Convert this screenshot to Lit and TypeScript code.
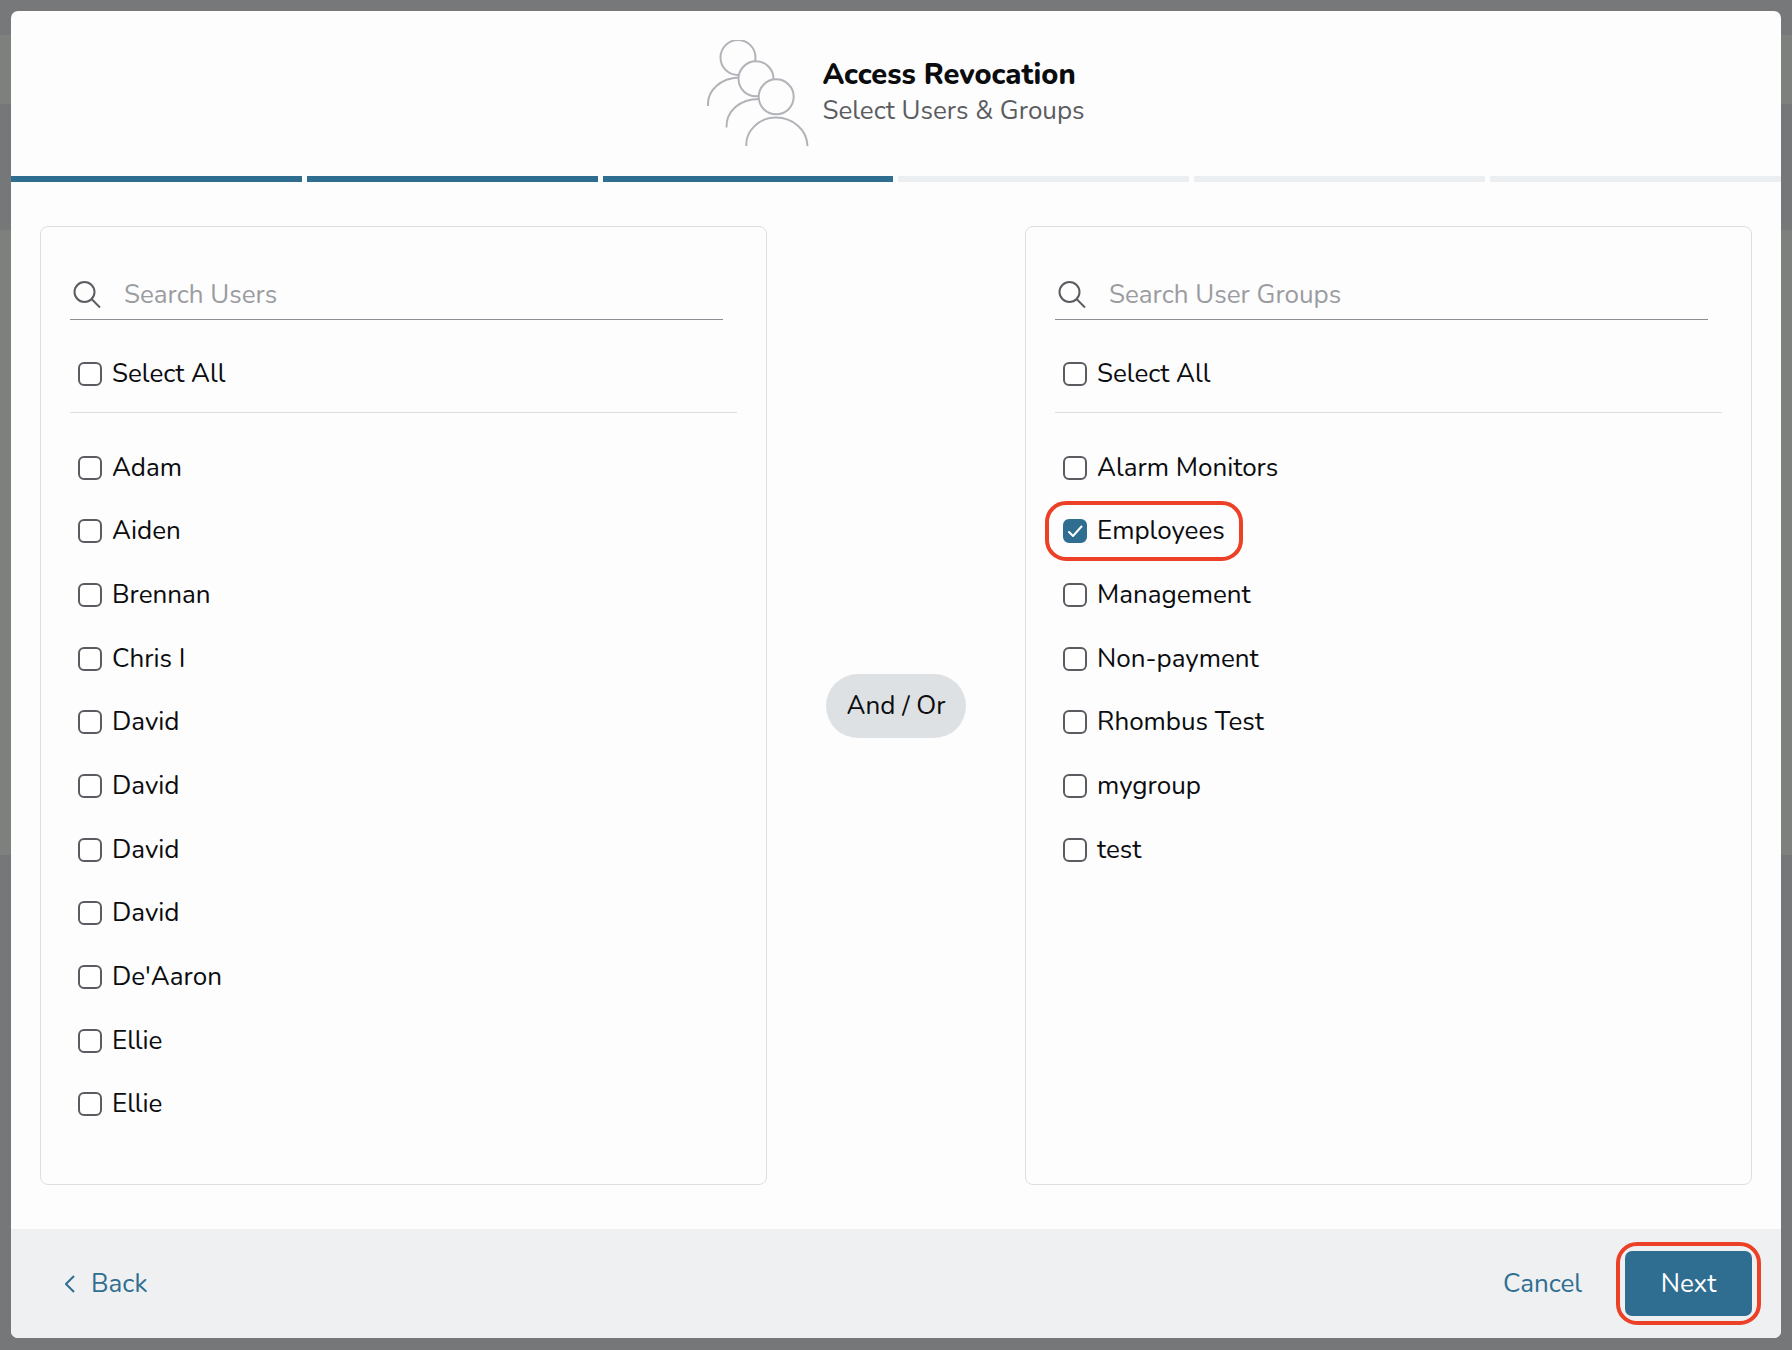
// ─────────────────────────────────────────────────────────────────────────────
// Access revocation wizard: "Select Users & Groups" step
//
//   <app-root>        dialog frame: header, step bar, body, footer
//   <step-bar>        segmented progress bar
//   <pick-list>       search field + "Select All" + list of checkboxes
//   <check-option>    one labelled checkbox
// ─────────────────────────────────────────────────────────────────────────────

import { LitElement, html, css, svg } from "lit";
import { customElement, property, state } from "lit/decorators.js";
import { classMap } from "lit/directives/class-map.js";

interface Option {
  name: string;
  checked?: boolean;
  marked?: boolean; // drawn with the red callout ring
}

const USERS: Option[] = [
  { name: "Adam" },
  { name: "Aiden" },
  { name: "Brennan" },
  { name: "Chris I" },
  { name: "David" },
  { name: "David" },
  { name: "David" },
  { name: "David" },
  { name: "De'Aaron" },
  { name: "Ellie" },
  { name: "Ellie" },
];

const GROUPS: Option[] = [
  { name: "Alarm Monitors" },
  { name: "Employees", checked: true, marked: true },
  { name: "Management" },
  { name: "Non-payment" },
  { name: "Rhombus Test" },
  { name: "mygroup" },
  { name: "test" },
];

// ─── step-bar ────────────────────────────────────────────────────────────────
@customElement("step-bar")
class StepBar extends LitElement {
  @property({ type: Number }) total = 6;
  @property({ type: Number }) current = 1;

  static styles = css`
    :host {
      display: flex;
      gap: 5px;
      height: 6px;
    }

    .step {
      flex: 1;
      background: #eceff2;
    }

    .step.done {
      background: #2f6e91;
    }
  `;

  render() {
    return Array.from(
      { length: this.total },
      (_, i) => html`<div class=${classMap({ step: true, done: i < this.current })}></div>`
    );
  }
}

// ─── check-option ────────────────────────────────────────────────────────────
@customElement("check-option")
class CheckOption extends LitElement {
  @property() label = "";
  @property({ type: Boolean }) checked = false;
  @property({ type: Boolean }) marked = false;

  static styles = css`
    :host {
      display: block;
      padding-left: 8px;
    }

    .option {
      position: relative;
      display: flex;
      align-items: center;
      gap: 10px;
      width: fit-content;
      line-height: 36px;
      cursor: pointer;
    }

    /* input and tick share one grid cell */
    .box {
      display: grid;
      width: 24px;
      height: 24px;
    }

    .box > * {
      grid-area: 1 / 1;
    }

    input {
      appearance: none;
      box-sizing: border-box;
      width: 24px;
      height: 24px;
      margin: 0;
      border: 2px solid #5b5c62;
      border-radius: 6px;
      background: #fff;
      cursor: pointer;
    }

    input:checked {
      border-color: #2f6e91;
      background: #2f6e91;
    }

    .tick {
      display: none;
      pointer-events: none;
      fill: none;
      stroke: #fff;
      stroke-width: 2;
      stroke-linecap: round;
      stroke-linejoin: round;
    }

    input:checked + .tick {
      display: block;
    }

    .marked::after {
      content: "";
      position: absolute;
      inset: -12px -18px;
      border: 4px solid #ec4126;
      border-radius: 21px;
      pointer-events: none;
    }
  `;

  private _onChange(e: Event) {
    this.checked = (e.target as HTMLInputElement).checked;
    this.dispatchEvent(new CustomEvent("toggle", { detail: this.checked }));
  }

  render() {
    return html`
      <label class=${classMap({ option: true, marked: this.marked })}>
        <span class="box">
          <input type="checkbox" .checked=${this.checked} @change=${this._onChange} />
          <svg class="tick" viewBox="0 0 24 24" width="24" height="24">
            <path d="M6 13 L10 17 L18.5 7.5" />
          </svg>
        </span>
        <span>${this.label}</span>
      </label>
    `;
  }
}

// ─── pick-list ───────────────────────────────────────────────────────────────
@customElement("pick-list")
class PickList extends LitElement {
  @property() placeholder = "";
  @property({ attribute: false }) options: Option[] = [];
  @state() private _query = "";

  static styles = css`
    :host {
      box-sizing: border-box;
      display: flex;
      flex-direction: column;
      padding: 43px 29px 48px;
      border: 1px solid #dcdee2;
      border-radius: 8px;
    }

    .search {
      display: flex;
      align-items: center;
      gap: 23px;
      height: 49px;
      margin-right: 14px;
      padding-left: 3px;
      border-bottom: 1px solid #8d8e93;
    }

    .search svg {
      flex: none;
      fill: none;
      stroke: #5b5c62;
      stroke-width: 2;
    }

    .search input {
      flex: 1;
      min-width: 0;
      padding: 0;
      border: 0;
      outline: 0;
      background: none;
      color: #0b0c0e;
      font: inherit;
      line-height: 36px;
    }

    .search input::placeholder {
      color: #9b9ca0;
      opacity: 1;
    }

    .all {
      padding: 36px 0 20px;
      border-bottom: 1px solid #dcdee2;
    }

    /* both lists keep the same eleven-row rhythm */
    .list {
      flex: 1;
      display: grid;
      grid-template-rows: repeat(11, 1fr);
      align-items: center;
      margin: 23px 0 0;
      padding: 0;
      list-style: none;
    }
  `;

  private _toggleAll(e: CustomEvent) {
    this.options = this.options.map((o) => ({ ...o, checked: e.detail }));
  }

  private _toggle(option: Option, e: CustomEvent) {
    this.options = this.options.map((o) => (o === option ? { ...o, checked: e.detail } : o));
  }

  render() {
    const query = this._query.toLowerCase();
    const shown = this.options.filter((o) => o.name.toLowerCase().includes(query));

    return html`
      <div class="search">
        <svg viewBox="0 0 28 28" width="28" height="28">
          <circle cx="11.5" cy="11" r="10" />
          <path d="M18.5 18 L27 26.5" />
        </svg>
        <input
          type="text"
          aria-label=${this.placeholder}
          placeholder=${this.placeholder}
          @input=${(e: Event) => (this._query = (e.target as HTMLInputElement).value)}
        />
      </div>
      <div class="all">
        <check-option label="Select All" @toggle=${this._toggleAll}></check-option>
      </div>
      <ul class="list">
        ${shown.map(
          (o) => html`
            <li>
              <check-option
                label=${o.name}
                .checked=${!!o.checked}
                .marked=${!!o.marked}
                @toggle=${(e: CustomEvent) => this._toggle(o, e)}
              ></check-option>
            </li>
          `
        )}
      </ul>
    `;
  }
}

// ─── app-root ────────────────────────────────────────────────────────────────
// People further back are painted first, so each head hides what is behind it.
const peopleIcon = svg`
  <path d="M1 66 C0 50 14 38 32 37.5" />
  <circle cx="31" cy="17.5" r="17.5" />
  <path d="M19.5 87.5 C19 71 33 59 52 59" />
  <circle cx="49" cy="38.8" r="17.5" />
  <path d="M39.3 106 C38.5 91 52 77.5 69 77.5 C86 77.5 100 90 100.5 106" />
  <circle cx="69.2" cy="56.8" r="17.5" />
`;

@customElement("app-root")
class AppRoot extends LitElement {
  static styles = css`
    /* bands of the dimmed page behind the dialog */
    :host {
      box-sizing: border-box;
      display: flex;
      min-height: 100vh;
      padding: 11px 11px 12px;
      background: linear-gradient(
        #777879 35px,
        #7e807e 35px 104px,
        #767779 104px 230px,
        #7e807e 230px 855px,
        #767779 855px
      );
      color: #0b0c0e;
      font: 26px "Nunito", "Lato", "Open Sans", sans-serif;
    }

    .dialog {
      flex: 1;
      display: flex;
      flex-direction: column;
      border-radius: 7px;
      background: #fdfdfe;
      overflow: hidden;
    }

    .header {
      display: flex;
      justify-content: center;
      gap: 13px;
      padding: 29px 0;
    }

    .people {
      fill: #fdfdfe;
      stroke: #b2b3b8;
      stroke-width: 2;
    }

    .titles {
      padding-top: 17px;
    }

    h1 {
      margin: 0;
      font-size: 29px;
      font-weight: 800;
      line-height: 36px;
    }

    .subtitle {
      margin: 0;
      line-height: 36px;
      color: #5b5c60;
    }

    .body {
      flex: 1;
      display: grid;
      grid-template-columns: 1fr 258px 1fr;
      padding: 44px 29px;
    }

    .joiner {
      place-self: center;
      padding: 14px 21px;
      border-radius: 32px;
      background: #dee1e3;
      line-height: 36px;
    }

    .footer {
      display: flex;
      align-items: center;
      gap: 43px;
      padding: 22px 29px;
      background: #eff0f2;
    }

    button {
      padding: 0;
      border: 0;
      background: none;
      color: #2f6e91;
      font: inherit;
      line-height: 36px;
      cursor: pointer;
    }

    .back {
      display: flex;
      align-items: center;
      gap: 16px;
      margin-right: auto;
      padding-left: 25px;
    }

    .back svg {
      fill: none;
      stroke: #2f6e91;
      stroke-width: 2;
    }

    .next {
      position: relative;
      min-width: 127px;
      height: 65px;
      border-radius: 7px;
      background: #2f6e91;
      color: #fff;
    }

    .next::after {
      content: "";
      position: absolute;
      inset: -9px;
      border: 4px solid #ec4126;
      border-radius: 21px;
      pointer-events: none;
    }
  `;

  render() {
    return html`
      <main class="dialog">
        <header class="header">
          <svg class="people" viewBox="0 0 102 107" width="102" height="107">${peopleIcon}</svg>
          <div class="titles">
            <h1>Access Revocation</h1>
            <p class="subtitle">Select Users &amp; Groups</p>
          </div>
        </header>
        <step-bar total="6" current="3"></step-bar>
        <section class="body">
          <pick-list placeholder="Search Users" .options=${USERS}></pick-list>
          <span class="joiner">And / Or</span>
          <pick-list placeholder="Search User Groups" .options=${GROUPS}></pick-list>
        </section>
        <footer class="footer">
          <button class="back" type="button">
            <svg viewBox="0 0 10 18" width="10" height="18"><path d="M9 1 L1 9 L9 17" /></svg>
            Back
          </button>
          <button type="button">Cancel</button>
          <button class="next" type="button">Next</button>
        </footer>
      </main>
    `;
  }
}
